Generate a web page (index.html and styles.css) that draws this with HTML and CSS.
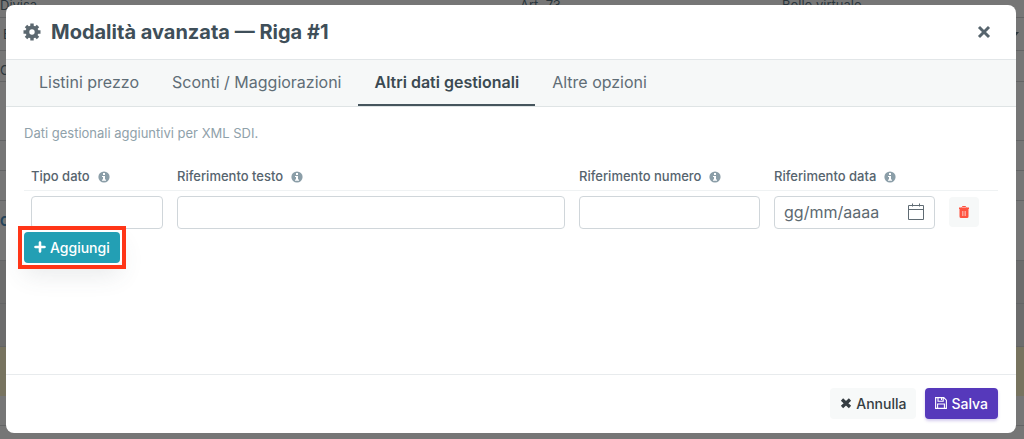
FILE: index.html
```html
<!DOCTYPE html>
<html lang="it">
<head>
<meta charset="utf-8">
<meta name="viewport" content="width=device-width, initial-scale=1">
<title>Modalità avanzata</title>
<link rel="stylesheet" href="styles.css">
</head>
<body>
<svg class="sprite" aria-hidden="true">
  <symbol id="info" viewBox="0 0 12 12"><circle cx="6" cy="6" r="5.600" fill="currentColor"/><path d="M5 2h2v2H5zM4 5h3v3.500h1v1.200H4V8.500h1V6H4z" fill="#fff"/></symbol>
  <symbol id="times" viewBox="0 0 12 12"><path d="M1.700 1.700 10.300 10.300M10.300 1.700 1.700 10.300" stroke="currentColor" stroke-width="2.500" fill="none"/></symbol>
</svg>

<div class="page" aria-hidden="true">
  <div class="page-row page-labels"><span>Divisa</span><span>Art. 73</span><span>Bollo virtuale</span></div>
  <div class="page-row page-value"><span>EUR</span><svg class="caret" viewBox="0 0 8 5"><path d="M0 0h8L4 5z" fill="currentColor"/></svg></div>
  <div class="page-row page-name">Co</div>
  <div class="page-row page-gap"></div>
  <div class="page-row page-thin"></div>
  <div class="page-row page-thin"></div>
  <div class="page-row page-link">Co</div>
  <div class="page-row page-band"></div>
  <div class="page-row page-band"></div>
  <div class="page-row page-notice"></div>
  <div class="page-row page-thin"></div>
</div>

<div class="backdrop">
  <section class="modal" role="dialog" aria-modal="true" aria-labelledby="title">
    <header class="modal-header">
      <svg class="gear" viewBox="0 0 18 18" aria-hidden="true"><g fill="currentColor"><path d="M7.300.5h3.400v17H7.300z"/><path d="M7.300.5h3.400v17H7.300z" transform="rotate(45 9 9)"/><path d="M7.300.5h3.400v17H7.300z" transform="rotate(90 9 9)"/><path d="M7.300.5h3.400v17H7.300z" transform="rotate(135 9 9)"/><circle cx="9" cy="9" r="6.500"/></g><circle cx="9" cy="9" r="2.700" fill="#fff"/></svg>
      <h1 class="modal-title" id="title">Modalità avanzata — Riga #1</h1>
      <button class="close" type="button" aria-label="Chiudi"><svg viewBox="0 0 12 12"><use href="#times"/></svg></button>
    </header>

    <nav class="tabs">
      <a class="tab" href="#listini">Listini prezzo</a>
      <a class="tab" href="#sconti">Sconti / Maggiorazioni</a>
      <a class="tab tab-active" href="#altri" aria-current="page">Altri dati gestionali</a>
      <a class="tab" href="#opzioni">Altre opzioni</a>
    </nav>

    <div class="modal-body">
      <p class="hint">Dati gestionali aggiuntivi per XML SDI.</p>
      <table class="grid">
        <colgroup><col class="col-type"><col><col class="col-number"><col class="col-date"><col class="col-action"></colgroup>
        <thead>
          <tr>
            <th><label for="tipo">Tipo dato</label><svg class="info"><use href="#info"/></svg></th>
            <th><label for="testo">Riferimento testo</label><svg class="info"><use href="#info"/></svg></th>
            <th><label for="numero">Riferimento numero</label><svg class="info"><use href="#info"/></svg></th>
            <th><label for="data">Riferimento data</label><svg class="info"><use href="#info"/></svg></th>
            <th></th>
          </tr>
        </thead>
        <tbody>
          <tr>
            <td><input class="field" id="tipo" type="text"></td>
            <td><input class="field" id="testo" type="text"></td>
            <td><input class="field" id="numero" type="text"></td>
            <td>
              <div class="field date">
                <input class="date-input" id="data" type="text" placeholder="gg/mm/aaaa">
                <svg class="calendar" viewBox="0 0 18 18" aria-hidden="true"><path d="M1.500 2.500h15v14h-15zM1.500 6.500h15M5.500.5v3M12.500.5v3" fill="none" stroke="currentColor"/></svg>
              </div>
            </td>
            <td><button class="trash" type="button" aria-label="Elimina"><svg viewBox="0 0 12 14"><path d="M1 2.500h2.500L4.500 1h3l1 1.500H11V4H1zM1.500 4h9v7.500q0 1.500-1.500 1.500H3q-1.500 0-1.500-1.500z" fill="currentColor"/><path d="M4 2.500h4M4.500 6v5M6 6v5M7.500 6v5" stroke="#fbc4bd" stroke-width=".7"/></svg></button></td>
          </tr>
        </tbody>
      </table>
      <button class="btn btn-add" type="button"><svg class="btn-icon" viewBox="0 0 12 12"><path d="M6 1.500v9M1.500 6h9" stroke="currentColor" stroke-width="2.600" stroke-linecap="round"/></svg>Aggiungi</button>
    </div>

    <footer class="modal-footer">
      <button class="btn btn-light" type="button"><svg class="btn-icon" viewBox="0 0 12 12"><path d="M2 2.500 10 10M10 2.500 2 10" stroke="currentColor" stroke-width="3.300"/></svg>Annulla</button>
      <button class="btn btn-primary" type="button"><svg class="btn-icon" viewBox="0 0 12 12"><path d="M.6.6h8.200l2.600 2.600v8.200H.6zM3 .6v3.600h5.200V.6M6.500 1v2M2.600 11.400V7h6.800v4.400" fill="none" stroke="currentColor" stroke-width="1.100"/></svg>Salva</button>
    </footer>
  </section>
</div>
</body>
</html>
```

FILE: styles.css
```css
* { box-sizing: border-box; }

body {
  margin: 0;
  min-height: 100vh;
  overflow: hidden;
  background: #767676;
  color: #3f4f59;
  font-family: Inter, "Open Sans", sans-serif;
  font-size: 14px;
}

button, input { font: inherit; color: inherit; }
.sprite { position: absolute; width: 0; height: 0; }

/* Form behind the dialog */
.page { height: 100vh; overflow: hidden; color: #2b363d; font-size: 13px; }
.page-row { border-bottom: 1px solid #636465; }
.page-labels { display: grid; grid-template-columns: 520px 262px auto; height: 18px; line-height: 10px; }
.page-value { display: flex; align-items: center; justify-content: space-between; height: 33px; padding: 0 5px 0 3px; }
.caret { width: 8px; height: 5px; }
.page-name { height: 31px; line-height: 38px; }
.page-gap { height: 59px; }
.page-thin { height: 30px; }
.page-link { height: 60px; color: #24435a; font-weight: 700; line-height: 40px; }
.page-band { height: 43px; background: #6c6c6c; }
.page-notice { height: 49px; background: #77735f; border: 0; }

/* Dialog */
.backdrop {
  position: fixed;
  inset: 0;
  display: flex;
  padding: 5px 8px 6px 6px;
}
.modal {
  flex: 1;
  display: flex;
  flex-direction: column;
  overflow: hidden;
  border-radius: 8px;
  background: #fff;
}
.modal-header {
  display: flex;
  align-items: center;
  gap: 10px;
  height: 55px;
  padding: 0 25px 0 17px;
  border-bottom: 1px solid #e2e6e8;
}
.gear { width: 18px; height: 18px; color: #5c6870; }
.modal-title { flex: 1; margin: 0; font-size: 20px; font-weight: 700; }
.close { width: 14px; height: 14px; padding: 0; border: 0; background: none; color: #56646d; }
.close svg { display: block; width: 14px; height: 14px; }

.tabs {
  display: flex;
  gap: 1px;
  height: 47px;
  padding: 0 17px;
  border-bottom: 1px solid #dfe4e5;
  background: #f6f8f8;
}
.tab {
  padding: 0 16px;
  border-bottom: 2px solid transparent;
  color: #5f6d76;
  font-size: 16px;
  line-height: 44px;
  text-decoration: none;
  white-space: nowrap;
}
.tab-active { border-color: #46555d; color: #3b4a52; font-weight: 600; }

.modal-body { flex: 1; padding: 16px 18px; }
.hint { margin: 0 0 23px; color: #8fa1aa; font-size: 13px; line-height: 20px; }

.grid { width: 100%; border-collapse: collapse; table-layout: fixed; }
.col-type { width: 146px; }
.col-number { width: 195px; }
.col-date { width: 175px; }
.col-action { width: 56px; }
.grid th {
  height: 24px;
  padding: 0 0 4px 7px;
  border-bottom: 1px solid #eff2f3;
  color: #56646e;
  font-size: 13px;
  font-weight: 500;
  line-height: 18px;
  text-align: left;
  white-space: nowrap;
}
.grid td { padding: 5px 7px 3px; }
.info { width: 12px; height: 12px; margin-left: 8px; color: #8b9ea8; vertical-align: -2px; }
.field {
  display: block;
  width: 100%;
  height: 33px;
  padding: 0 9px;
  border: 1px solid #d0d6da;
  border-radius: 4px;
  background: #fff;
}
.date { display: flex; align-items: center; }
.date-input { flex: 1; min-width: 0; padding: 0; border: 0; outline: 0; font-size: 16px; }
.date-input::placeholder { color: #5d6971; opacity: 1; }
.calendar { width: 18px; height: 18px; color: #5f6b73; }
.trash {
  display: flex;
  align-items: center;
  justify-content: center;
  width: 30px;
  height: 30px;
  padding: 0;
  border: 0;
  border-radius: 4px;
  background: #f6f8f8;
  color: #ff523f;
}
.trash svg { width: 12px; height: 14px; }

.btn {
  display: inline-flex;
  align-items: center;
  gap: 4px;
  height: 31px;
  padding: 0 10px;
  border: 0;
  border-radius: 4px;
  font-weight: 500;
}
.btn-icon { width: 12px; height: 12px; }
.btn-add {
  position: relative;
  background: #239fb4;
  color: #fff;
  box-shadow: 0 0 0 2px #fff, 0 12px 24px rgba(63, 79, 89, 0.12);
}
.btn-add::after {
  content: "";
  position: absolute;
  inset: -6px;
  border: 4px solid #ff3517;
}
.modal-footer {
  display: flex;
  align-items: center;
  justify-content: flex-end;
  gap: 9px;
  height: 59px;
  padding: 0 18px 2px;
  border-top: 1px solid #e8ebed;
}
.btn-light { background: #f7f9f9; color: #353d42; }
.btn-primary { background: #5639bb; color: #fff; box-shadow: 0 2px 3px rgba(86, 57, 187, 0.25); }
```
